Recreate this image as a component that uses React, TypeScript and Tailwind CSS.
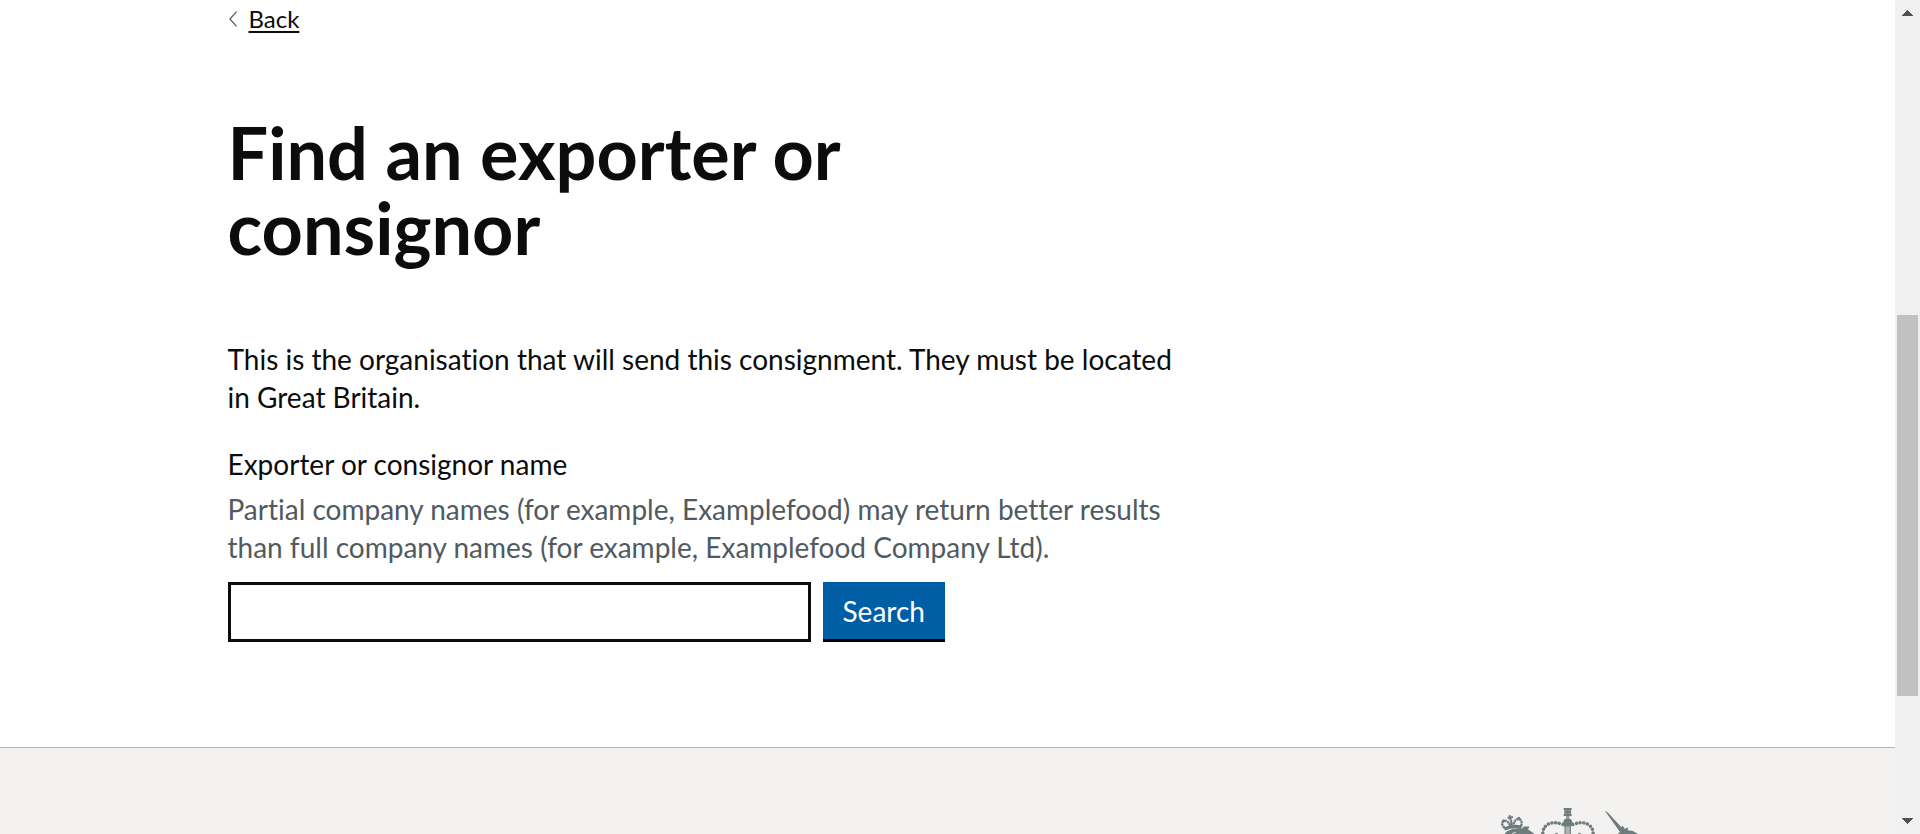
function ChevronLeft() {
  return (
    <svg className="h-4 w-2 shrink-0" viewBox="0 0 8 16" fill="none" stroke="#505a5f" strokeWidth="1.2" aria-hidden="true">
      <path d="M7.6 0.6 L0.9 8 L7.6 15.4" />
    </svg>
  );
}

function Crest() {
  return (
    <svg className="h-11 w-[188px] shrink-0" viewBox="0 0 188 44" fill="#6f7b7d" role="img" aria-label="Royal coat of arms">
      {/* lion's crown */}
      <g stroke="#6f7b7d" fill="none">
        <path d="M24.3 39 Q33 35 41.5 37.3" strokeWidth="3.4" />
        <path d="M24.5 38 Q20 33 24 31 Q28 30 30.5 36" strokeWidth="2.4" strokeDasharray="2.4 0.5" />
        <path d="M41 36.5 Q43 30 38.5 29 Q34.5 29 33 36" strokeWidth="2.4" strokeDasharray="2.4 0.5" />
        <path d="M31 30 L32 37" strokeWidth="2" />
        <path d="M29.6 25.2 L30.6 30 M27.6 28 L33 27" strokeWidth="2.2" />
      </g>
      <circle cx="23.6" cy="30.8" r="1.5" />
      <circle cx="38.8" cy="28.2" r="1.5" />
      {/* lion's mane */}
      <path d="M24.5 44 L27 41.3 Q34 37.3 42 38.5 L44 36.6 L49.5 36.4 L48 39.5 L50.5 41 L54.5 44 Z" />
      <path d="M32 43.6 L36 42.2" stroke="#f3f2f1" strokeWidth="0.8" />
      {/* central crown */}
      <path d="M83.5 18 H91.8 L90.8 22 L91.8 26 H83.5 L84.5 22 Z" />
      <path d="M85.5 20 L86.5 21 M89.8 20 L88.8 21 M85.5 24 L86.5 23 M89.8 24 L88.8 23" stroke="#f3f2f1" strokeWidth="0.6" />
      <path d="M86 26 H89.5 V30 H86 Z" fillOpacity="0.75" />
      <path d="M84.5 29 H91 L92.8 33 L91 36.5 H84.5 L82.8 33 Z" />
      <rect x="84.8" y="36" width="5.8" height="8" fillOpacity="0.55" />
      <path d="M85 36 V44 M90.4 36 V44" stroke="#6f7b7d" strokeWidth="1" />
      <g fill="none" stroke="#6f7b7d" strokeWidth="3.4" strokeLinecap="round" strokeDasharray="0.1 3.6">
        <path d="M83 34.6 Q74 30.8 67.5 34.6 Q62.5 38 62.8 44" />
        <path d="M92.8 34.6 Q102 30.8 108.4 34.6 Q113.4 38 113.1 44" />
      </g>
      <circle cx="76.5" cy="44" r="1.3" />
      <circle cx="99.5" cy="44" r="1.3" />
      {/* unicorn's horn and head */}
      <path d="M124.8 20.8 L127.8 22.4 L141.4 37.2 L142.6 35.6 L144.6 38.8 L148.4 37.6 L147.6 40.2 L153 41 L158 44 H137.5 L140 42 Z" />
    </svg>
  );
}

function ScrollBar() {
  return (
    <div className="flex w-[25px] shrink-0 flex-col items-center justify-between bg-[#f0f0f0]" aria-hidden="true">
      <svg className="mt-2.5 h-1.5 w-[11px] shrink-0" viewBox="0 0 11 6" fill="#505050" shapeRendering="crispEdges">
        <path d="M5.5 0 L11 6 H0 Z" />
      </svg>
      <div className="flex w-full grow flex-col items-center py-2">
        <div className="grow-[291]" />
        <div className="w-[21px] grow-[381] bg-[#c1c1c1]" />
        <div className="grow-[114]" />
      </div>
      <svg className="mb-2.5 h-1.5 w-[11px] shrink-0" viewBox="0 0 11 6" fill="#505050" shapeRendering="crispEdges">
        <path d="M0 0 H11 L5.5 6 Z" />
      </svg>
    </div>
  );
}

export default function App() {
  return (
    <div className="flex h-screen overflow-hidden bg-white font-['Lato','Liberation_Sans',sans-serif] text-[#0b0c0c] [font-variant-ligatures:none]">
      <div className="min-w-0 grow overflow-hidden">
        <main className="mx-auto max-w-[1440px] pt-1 pb-[105px]">
          <a href="#" className="flex w-max items-center gap-3 pl-px text-[24px] leading-[30px]">
            <ChevronLeft />
            <span className="underline decoration-2 underline-offset-3 [text-decoration-skip-ink:none]">Back</span>
          </a>
          <div className="max-w-[950px]">
            <h1 className="mt-[81px] max-w-[720px] text-[72px] leading-[75px] font-bold">Find an exporter or consignor</h1>
            <p className="mt-[75px] text-[28px] leading-[38px]">
              This is the organisation that will send this consignment. They must be located in Great Britain.
            </p>
            <form className="mt-[29px] text-[28px] leading-[38px]" onSubmit={(e) => e.preventDefault()}>
              <label htmlFor="exporter-name" className="block">
                Exporter or consignor name
              </label>
              <p id="exporter-hint" className="mt-[7px] text-[#505a5f]">
                Partial company names (for example, Examplefood) may return better results than full company names (for
                example, Examplefood Company Ltd).
              </p>
              <div className="mt-4 flex gap-3">
                <input
                  id="exporter-name"
                  type="text"
                  aria-describedby="exporter-hint"
                  className="h-[60px] w-[583px] border-3 border-[#0b0c0c] bg-white px-2 outline-none"
                />
                <button type="submit" className="h-[60px] border-b-3 border-black bg-[#005ea5] px-5 text-white">
                  Search
                </button>
              </div>
            </form>
          </div>
        </main>
        <footer className="border-t border-[#b1b4b6] bg-[#f3f2f1] pt-[42px]">
          <div className="mx-auto flex h-60 max-w-[1440px] justify-end">
            <Crest />
          </div>
        </footer>
      </div>
      <ScrollBar />
    </div>
  );
}
